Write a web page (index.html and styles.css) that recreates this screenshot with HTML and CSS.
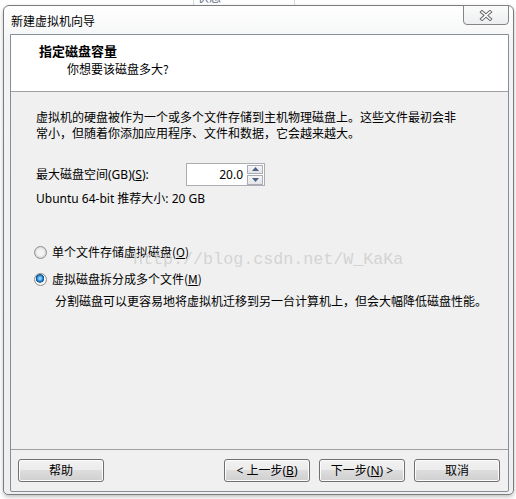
FILE: index.html
```html
<!DOCTYPE html>
<html lang="zh-CN">
<head>
<meta charset="utf-8">
<title>新建虚拟机向导</title>
<link rel="stylesheet" href="styles.css">
</head>
<body>
<div class="backdrop">
  <span class="bd-line bd-line-1"></span>
  <span class="bd-text">状态</span>
  <span class="bd-line bd-line-2"></span>
</div>
<div class="window">
  <div class="titlebar">
    <span class="title">新建虚拟机向导</span>
    <button class="close" aria-label="关闭">
      <svg width="14" height="11" viewBox="0 0 14 11">
        <path d="M3 2 L11 9 M11 2 L3 9" stroke="#6b6b6b" stroke-width="3.6" stroke-linecap="square" fill="none"/>
        <path d="M3 2 L11 9 M11 2 L3 9" stroke="#ffffff" stroke-width="1.6" stroke-linecap="square" fill="none"/>
      </svg>
    </button>
  </div>
  <div class="client">
    <div class="header">
      <div class="h-title">指定磁盘容量</div>
      <div class="h-sub">你想要该磁盘多大?</div>
    </div>
    <div class="content">
      <p class="desc">虚拟机的硬盘被作为一个或多个文件存储到主机物理磁盘上。这些文件最初会非<br>常小，但随着你添加应用程序、文件和数据，它会越来越大。</p>
      <div class="spin-row">
        <span class="spin-label">最大磁盘空间(GB)(<u>S</u>):</span>
        <div class="spin">
          <span class="spin-value">20.0</span>
          <div class="spin-btns">
            <span class="spin-btn"><svg width="7" height="4" viewBox="0 0 7 4"><path d="M0 4 L3.5 0 L7 4 Z" fill="#4d6185"/></svg></span>
            <span class="spin-btn"><svg width="7" height="4" viewBox="0 0 7 4"><path d="M0 0 L3.5 4 L7 0 Z" fill="#4d6185"/></svg></span>
          </div>
        </div>
      </div>
      <div class="hint">Ubuntu 64-bit 推荐大小: 20 GB</div>
      <div class="radios">
        <div class="radio-row"><span class="radio"></span><span>单个文件存储虚拟磁盘(<u>O</u>)</span></div>
        <div class="radio-row"><span class="radio checked"></span><span>虚拟磁盘拆分成多个文件(<u>M</u>)</span></div>
        <div class="radio-note">分割磁盘可以更容易地将虚拟机迁移到另一台计算机上，但会大幅降低磁盘性能。</div>
      </div>
      <div class="watermark">http://blog.csdn.net/W_KaKa</div>
    </div>
    <div class="footer">
      <button class="btn">帮助</button>
      <span class="spacer"></span>
      <button class="btn">&lt; 上一步(<u>B</u>)</button>
      <button class="btn">下一步(<u>N</u>) &gt;</button>
      <button class="btn">取消</button>
    </div>
  </div>
</div>
</body>
</html>
```

FILE: styles.css
```css
* { box-sizing: border-box; }

html, body {
  margin: 0;
  padding: 0;
  background: #ffffff;
  width: 516px;
  height: 499px;
  overflow: hidden;
  font-family: "Noto Sans", "Noto Sans CJK SC", sans-serif;
  font-size: 12px;
  color: #000;
}

.backdrop {
  position: absolute;
  left: 0;
  top: 0;
  width: 516px;
  height: 6px;
  overflow: hidden;
}
.bd-line {
  position: absolute;
  top: 0;
  width: 1px;
  height: 6px;
  background: #d5dbe3;
}
.bd-line-1 { left: 193px; }
.bd-line-2 { left: 294px; }
.bd-text {
  position: absolute;
  left: 197px;
  top: -10px;
  font-size: 12px;
  line-height: 14px;
  color: #5a6a80;
  font-family: "Noto Sans CJK SC", sans-serif;
}

.window {
  position: relative;
  margin: 5px 0 0 3px;
  width: 511px;
  height: 490px;
  border: 1px solid #7b7b7b;
  border-radius: 6px 6px 5px 5px;
  background: linear-gradient(#ffffff, #f2f3f4 40px, #eeeff0);
  padding: 0 4px 2px 6px;
  display: flex;
  flex-direction: column;
  box-shadow: 0 2px 4px rgba(0, 0, 0, 0.25);
}

.titlebar {
  height: 28px;
  display: flex;
  align-items: center;
  padding-left: 1px;
}
.title {
  font-family: "Noto Sans CJK SC", sans-serif;
  font-size: 12px;
  line-height: 14px;
  margin-top: 2px;
  color: #000;
}
.close {
  position: absolute;
  top: -1px;
  left: 459px;
  width: 46px;
  height: 20px;
  border: 1px solid #858585;
  border-radius: 0 0 4px 4px;
  background: linear-gradient(#fbfbfb, #eceeef);
  padding: 0;
  display: flex;
  align-items: center;
  justify-content: center;
}

.client {
  flex: 1;
  border: 1px solid #898c95;
  background: #f0f0f0;
  display: flex;
  flex-direction: column;
  border-radius: 0 0 2px 2px;
}

.header {
  height: 57px;
  background: #ffffff;
  border-bottom: 1px solid #a0a0a0;
  padding: 8px 0 0 28px;
}
.h-title {
  font-family: "Noto Sans CJK SC", sans-serif;
  font-weight: bold;
  font-size: 13px;
  line-height: 16px;
}
.h-sub {
  font-family: "Noto Sans CJK SC", sans-serif;
  font-size: 12px;
  line-height: 16px;
  margin: 2px 0 0 28px;
}

.content {
  flex: 1;
  position: relative;
  padding: 17px 0 0 25px;
}
.desc {
  margin: 0;
  line-height: 16px;
  font-family: "Noto Sans CJK SC", sans-serif;
}

.spin-row {
  display: flex;
  align-items: center;
  margin-top: 22px;
  height: 23px;
}
.spin-label {
  width: 150px;
  line-height: 16px;
}
.spin {
  width: 79px;
  height: 23px;
  border: 1px solid #abadb3;
  border-top-color: #abadb3;
  background: #fff;
  display: flex;
  align-items: center;
  justify-content: flex-end;
  padding: 1px;
}
.spin-value {
  line-height: 16px;
  margin-right: 4px;
  color: #000;
}
.spin-btns {
  display: flex;
  flex-direction: column;
  gap: 1px;
  height: 20px;
}
.spin-btn {
  width: 16px;
  height: 10px;
  border: 1px solid #a8adb6;
  background: linear-gradient(#f6f6f6, #e2e4e8);
  display: flex;
  align-items: center;
  justify-content: center;
}

.hint {
  margin-top: 5px;
  line-height: 16px;
}

.radios {
  margin-top: 37px;
}
.radio-row {
  display: flex;
  align-items: center;
  gap: 5px;
  height: 16px;
  line-height: 16px;
  margin-left: -2px;
  font-family: "Noto Sans CJK SC", sans-serif;
}
.radio-row + .radio-row { margin-top: 11px; }
.radio {
  width: 13px;
  height: 13px;
  border-radius: 50%;
  border: 1px solid #8e8f8f;
  background: radial-gradient(circle at 50% 50%, #f4f4f4 0 3px, #dcdcdc 5px, #ececec 6px);
  flex: none;
}
.radio.checked {
  background:
    radial-gradient(circle at 45% 40%, #8ad1ff 0 1px, #1e7bc4 3px, #0d4c86 4px, transparent 4.5px),
    radial-gradient(circle, #f4f4f4 0 5px, #e4e4e4 6px);
}
.radio-note {
  margin: 6px 0 0 19px;
  line-height: 16px;
  font-family: "Noto Sans CJK SC", sans-serif;
}

.watermark {
  position: absolute;
  left: 122px;
  top: 158px;
  font-family: "Liberation Mono", monospace;
  font-size: 16.7px;
  line-height: 20px;
  color: #d4d4d4;
  letter-spacing: 0;
}

.footer {
  height: 42px;
  border-top: 1px solid #a0a0a0;
  padding: 9px 8px 9px 7px;
  display: flex;
  gap: 9px;
}
.spacer { flex: 1; }
.btn {
  width: 86px;
  height: 23px;
  border: 1px solid #707070;
  border-radius: 3px;
  background: linear-gradient(#f2f2f2 0, #ebebeb 50%, #dddddd 50%, #cfcfcf 100%);
  box-shadow: inset 0 0 0 1px #fcfcfc;
  font-family: "Noto Sans", "Noto Sans CJK SC", sans-serif;
  font-size: 12px;
  line-height: 16px;
  padding: 0;
  color: #000;
}

u { text-decoration: underline; text-underline-offset: 1px; }
```
